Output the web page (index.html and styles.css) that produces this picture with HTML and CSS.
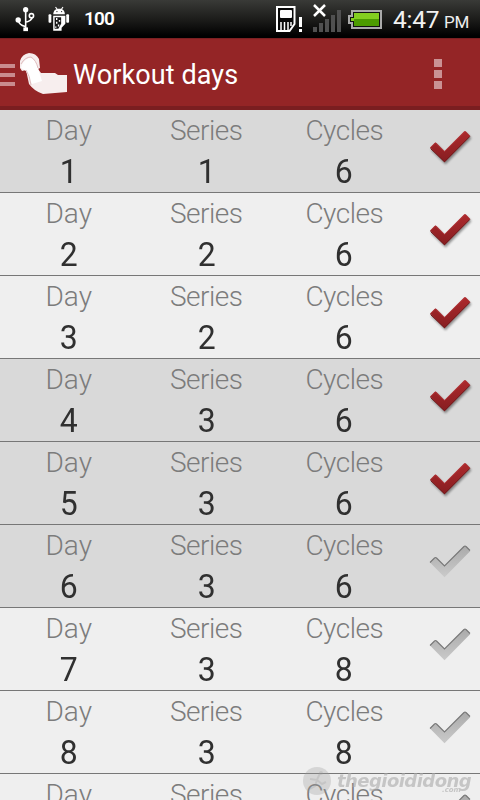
FILE: index.html
```
<!DOCTYPE html>
<html lang="en">
<head>
<meta charset="utf-8">
<title>Workout days</title>
<link rel="stylesheet" href="styles.css">
</head>
<body>
<svg class="defs" width="0" height="0" aria-hidden="true">
  <defs>
    <linearGradient id="red" x1="0" y1="0" x2="0" y2="1"><stop offset="0" stop-color="#ad2a2d"/><stop offset="1" stop-color="#861d20"/></linearGradient>
    <linearGradient id="grey" x1="0" y1="0" x2="0" y2="1"><stop offset="0" stop-color="#aaaaaa"/><stop offset="1" stop-color="#cacaca"/></linearGradient>
  </defs>
  <symbol id="done" viewBox="0 0 48 44">
    <path d="M4 19.500 8.500 15Q9.500 14 10.500 15L18.500 23 38 3.500Q39 2.500 40 3.500L44.300 8 18.500 34.300Z" fill="url(#red)"/>
    <path d="M4.500 20.500 18.500 33.800 43.800 8.500" fill="none" stroke="#701719" stroke-width="1"/>
    <path d="M5 19 9.500 15 18.500 23.500 39 3.500" fill="none" stroke="#bd4145" stroke-width="1" opacity=".6"/>
  </symbol>
  <symbol id="todo" viewBox="0 0 48 44">
    <path d="M4 19.500 8.500 15Q9.500 14 10.500 15L18.500 23 38 3.500Q39 2.500 40 3.500L44.300 8 18.500 34.300Z" fill="url(#grey)"/>
    <path d="M4 19.500 8.500 15Q9.500 14 10.500 15L18.500 23 38 3.500Q39 2.500 40 3.500L44 7.500" fill="none" stroke="#777" stroke-width="1.100"/>
  </symbol>
</svg>
<header class="status">
  <svg class="status-icons" width="90" height="38" viewBox="0 0 90 38">
    <g fill="none" stroke="#fff" stroke-width="1.700"><path d="M27.500 8V31M20 20.500Q20 25 27 27M27.500 22.500Q34 21 34.500 17"/><circle cx="33.700" cy="15.500" r="2.300"/></g>
    <g fill="#fff"><circle cx="27.500" cy="9" r="2.800"/><circle cx="19.500" cy="20" r="2.900"/><path d="M25 28h5v4h-5z"/>
    <path d="M57 14Q57.500 9 60.500 8.500L59 6.500 60 6 61.500 8H65.500L67 6 68 6.500 66.500 8.500Q69.500 10 69.500 14Z"/><rect x="52" y="14" width="3" height="9" rx="1"/><rect x="71" y="14" width="3" height="9" rx="1"/>
    <path d="M57 15.500H70V24L66 28.500V31.500H57Z"/></g>
    <path d="M58.500 17H65.500V24L62.500 29.500H58.500Z" fill="#171717"/>
    <g fill="#fff"><path d="M60 18h1.500v2H60zM63 20h1.500v2H63zM60 22h1.500v2H60zM62 25h1.500v2H62zM59 27h1.500v1.500H59z"/></g>
    <g fill="#222"><circle cx="61" cy="11" r=".7"/><circle cx="66" cy="11" r=".7"/></g>
  </svg>
  <span class="percent">100</span>
  <svg class="signals" width="112" height="38" viewBox="272 0 112 38">
    <path d="M277 7H294.500V24L289.500 31H277Z" fill="#080808" stroke="#fff" stroke-width="2"/>
    <rect x="280" y="10" width="12" height="8" rx="1" fill="#fff"/><path d="M281 22v8M284.500 22v8M288 22v8M291 22v4" stroke="#fff" stroke-width="1.500"/>
    <path d="M299 17h3v10h-3zM299 29h3v3h-3z" fill="#fff"/>
    <path d="M314 5 325 16M325 5 314 16" stroke="#fff" stroke-width="2.500"/>
    <path d="M313 27h4v5h-4zM319 23h4v9h-4zM325 19h4v13h-4zM331 15h4v17h-4zM337 10h4v22h-4z" fill="#505050"/>
    <path d="M351 10H382V29H351V24H348V15H351Z" fill="#aaa"/>
    <path d="M353 12H380V27H353V22H350V17H353Z" fill="#111"/>
    <path d="M354 13H379V19H354ZM351 18h3v3h-3z" fill="#83ce20"/><path d="M354 19H379V26H354Z" fill="#4c9b00"/>
  </svg>
  <span class="clock">4:47</span><span class="pm">PM</span>
</header>
<nav class="bar">
  <svg class="logo" width="70" height="70" viewBox="0 38 70 70">
    <path d="M0 64h15v4H0zM0 73h15v4H0zM0 82h15v4H0z" fill="#c98c8e"/>
    <path d="M20 68 20 61Q22 54 29 53Q36 53 39 59L40 68 38 69 41 73 55 73 58 75 67 75V92L43 94Q34 91 29 84L26 70 22 71Z" fill="#f7eeee"/>
    <path d="M21 68Q22 61 29 58Q34 57 37 65L42 81 32 84 26 71Z" fill="#fff"/>
    <path d="M21 64Q25 57 31 57Q36 60 38 68M26 70Q30 76 31 85" fill="none" stroke="#dfbdbe" stroke-width="1"/>
  </svg>
  <h1>Workout days</h1>
  <div class="more"><i></i><i></i><i></i></div>
</nav>
<main id="days"></main>
<div class="mark">
  <svg width="28" height="28" viewBox="0 0 28 28"><circle cx="14" cy="14" r="14" fill="#999" opacity=".5"/><path d="M17 6 14 13 7 12M14 13 19 17 23 15M14 13 12 19 7 22" fill="none" stroke="#999" stroke-width="2" opacity=".6"/><circle cx="18" cy="6" r="2" fill="#999" opacity=".6"/></svg>
  <span class="brand">thegioididong</span><span class="com">.com</span>
</div>
<script src="days.js"></script>
</body>
</html>
```
FILE: styles.css
```
* { box-sizing: border-box; }
body { margin: 0; width: 480px; height: 800px; overflow: hidden; position: relative; background: #efefef; font-family: Roboto, sans-serif; }
.defs { position: absolute; }
svg { display: block; flex: none; }
.status { height: 38px; display: flex; align-items: flex-start; background: linear-gradient(#393a37, #1d1d1b 50%, #000 95%); color: #fff; line-height: 38px; white-space: nowrap; }
.status-icons { width: 84px; }
.percent { width: 188px; font-size: 19px; font-weight: 600; letter-spacing: -.9px; }
.signals { margin-right: 9px; }
.clock { width: 51px; font-size: 24.500px; line-height: 39px; letter-spacing: -.2px; color: #f2f2f2; }
.pm { font-size: 17px; line-height: 44px; color: #eee; letter-spacing: -.2px; }
.bar { height: 72px; display: flex; background: #942526; border-top: 1px solid #7c2022; border-bottom: 4px solid #7a1e20; color: #fff; }
.logo { margin-top: -1px; }
h1 { width: 364px; margin: 0; padding-left: 3px; font-size: 27px; line-height: 72px; font-weight: 400; letter-spacing: .1px; white-space: nowrap; }
.more { padding-top: 20px; }
.more i { display: block; width: 8px; height: 8px; margin-bottom: 3px; background: #ca9294; }
main { height: 690px; overflow: hidden; }
.row { height: 83px; display: grid; grid-template-columns: repeat(3, 137.500px) 1fr; background: #efefef; border-bottom: 1px solid #777; }
.row.shaded { background: #d9d9d9; }
.cell { text-align: center; color: #7c7c7c; }
.label { display: block; height: 40px; font-size: 28px; line-height: 41px; font-weight: 300; }
.series .label, .cycles .label { letter-spacing: -.5px; }
.cycles .label { padding-left: 1px; }
.value { display: block; font-size: 34px; line-height: 42px; color: #303030; font-weight: 400; transform: scaleX(.94); }
.check { margin: 18px 0 0 13.500px; }
.check.done { filter: drop-shadow(1px 2px 1px #0006); }
.mark { position: absolute; left: 303px; top: 767px; display: flex; opacity: .6; color: #aaa; }
.brand { margin-left: 6px; font: italic 700 18px/28px "DejaVu Sans", sans-serif; letter-spacing: -.55px; white-space: nowrap; }
.com { position: absolute; left: 139px; top: 18px; font: italic 700 7px/10px "DejaVu Sans", sans-serif; }
```
FILE: days.js
```
const days = [
  [1, 1, 6, true, true], [2, 2, 6, false, true], [3, 2, 6, false, true],
  [4, 3, 6, true, true], [5, 3, 6, true, true], [6, 3, 6, true, false],
  [7, 3, 8, false, false], [8, 3, 8, false, false], [9, 3, 8, false, false]
];
const labels = ["Day", "Series", "Cycles"];
document.getElementById("days").innerHTML = days.map(day => {
  const state = day[4] ? "done" : "todo";
  const cells = labels.map((label, i) => `<div class="cell ${label.toLowerCase()}"><span class="label">${label}</span><span class="value">${day[i]}</span></div>`).join("");
  return `<section class="row${day[3] ? " shaded" : ""}">${cells}<svg class="check ${state}" width="48" height="44"><use href="#${state}"/></svg></section>`;
}).join("");
```
